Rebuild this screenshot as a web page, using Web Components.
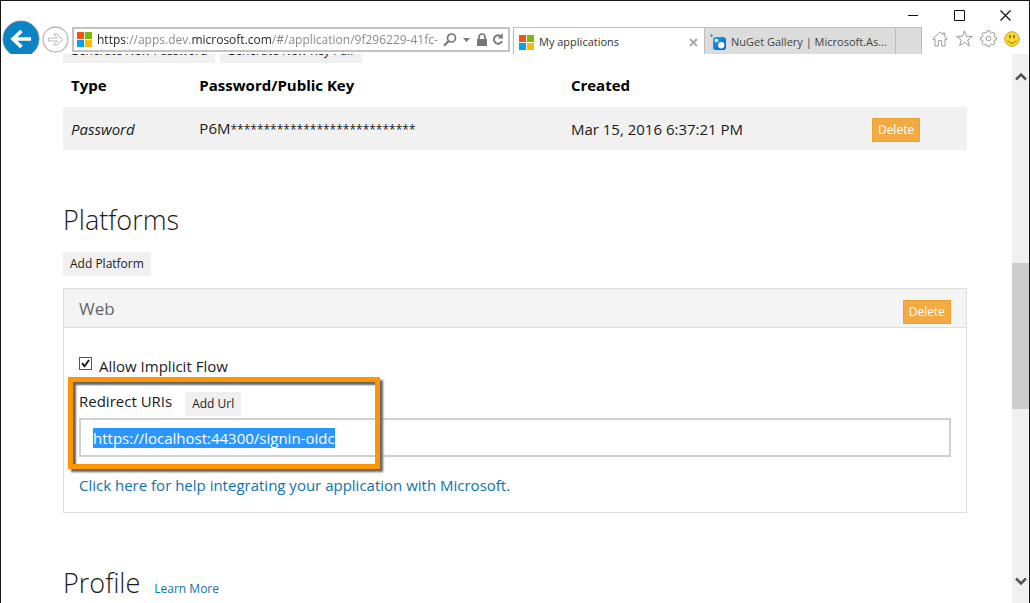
<!DOCTYPE html>
<html lang="en">
<head>
<meta charset="utf-8">
<title>My applications</title>
<style>
  html, body { margin: 0; height: 100%; }
  body { font-family: "Open Sans", "Noto Sans", sans-serif; font-size: 15px; line-height: 24px; color: #1b1b1b; overflow: hidden; }
</style>
</head>
<body>
<browser-window>
  <browser-toolbar slot="toolbar"></browser-toolbar>
  <app-page></app-page>
</browser-window>

<script>
const define = (name, html, setup) => {
  const template = document.createElement('template');
  template.innerHTML = '<style>*{box-sizing:border-box}:host{display:block}[hidden]{display:none}</style>' + html;
  customElements.define(name, class extends HTMLElement {
    constructor() {
      super();
      this.attachShadow({ mode: 'open' }).append(template.content.cloneNode(true));
    }
    connectedCallback() { if (setup) setup(this, this.shadowRoot); }
  });
};

define('ms-logo', `
  <style>:host { flex: none; width: 15px; height: 15px; } svg { display: block; }</style>
  <svg width="15" height="15" viewBox="0 0 15 15" aria-hidden="true">
    <path fill="#f8500f" d="M0 0h7v7H0z"/><path fill="#7dba00" d="M8 0h7v7H8z"/>
    <path fill="#00a1f1" d="M0 8h7v7H0z"/><path fill="#ffb900" d="M8 8h7v7H8z"/>
  </svg>`);

define('nuget-logo', `
  <style>:host { flex: none; width: 16px; height: 16px; } svg { display: block; }</style>
  <svg width="16" height="16" viewBox="0 0 16 16" aria-hidden="true">
    <defs><linearGradient id="g" x1="0" y1="0" x2="1" y2="1"><stop offset="0" stop-color="#1ba8ee"/><stop offset="1" stop-color="#0057c2"/></linearGradient></defs>
    <path fill="#1c8fe0" d="M1.500 0 3 1.500 1.500 3 0 1.500z"/>
    <rect x="3" y="3" width="13" height="13" rx="3" fill="url(#g)"/>
    <circle cx="6.500" cy="6.500" r="1.800" fill="#fff"/><circle cx="11.300" cy="11.300" r="3.200" fill="#fff"/>
  </svg>`);

define('icon-button', `
  <style>
    :host { flex: none; }
    button { display: flex; width: 100%; height: 100%; margin: 0; padding: 0; border: 0; background: none; align-items: center; justify-content: center; }
    ::slotted(svg) { display: block; }
  </style>
  <button type="button"><slot></slot></button>`,
  (host, root) => root.querySelector('button').setAttribute('aria-label', host.getAttribute('label')));

define('app-button', `
  <style>
    :host { display: inline-block; flex: none; }
    button { display: block; height: 24px; margin: 0; padding: 0 7px; border: 0; background: #f0f0f0; color: #1b1b1b; font: 12px/24px "Open Sans", "Noto Sans", sans-serif; white-space: nowrap; }
    :host([kind="warning"]) button { background: #f2ab43; border: 1px solid #efa32f; color: #fff; padding: 0 5px; line-height: 22px; }
  </style>
  <button type="button"><slot></slot></button>`);

define('browser-tab', `
  <style>
    :host { flex: 0 1 191px; min-width: 0; display: flex; align-items: center; gap: 5px; height: 27px; padding: 2px 5px 0; border: solid #bdbdbd; border-width: 1px 0 0 1px; background: #dcdcdc; color: #444; font-size: 11px; line-height: 18px; }
    :host([current]) { background: #fff; color: #333; }
    .title { flex: 1; min-width: 0; overflow: hidden; text-overflow: ellipsis; white-space: nowrap; }
    icon-button { width: 12px; height: 12px; }
  </style>
  <slot name="icon"></slot><span class="title"><slot></slot></span>
  <icon-button label="Close tab" hidden><svg width="9" height="9" viewBox="0 0 9 9"><path d="M1 1l7 7M8 1 1 8" stroke="#aaa" stroke-width="2"/></svg></icon-button>`,
  (host, root) => { root.querySelector('icon-button').hidden = !host.hasAttribute('current'); });

define('address-bar', `
  <style>
    :host { flex: 1; min-width: 0; display: flex; align-items: center; height: 25px; padding: 0 3px; gap: 5px; border: 2px solid #c3c3c3; background: #fff; }
    input { flex: 1; min-width: 0; margin: 0; padding: 0; border: 0; outline: 0; font: 12px/18px "Open Sans", "Noto Sans", sans-serif; color: transparent;
      background: linear-gradient(90deg, #222 0 29px, #858585 29px 94px, #222 94px 175px, #858585 175px); -webkit-background-clip: text; background-clip: text; }
    icon-button { width: 14px; height: 16px; }
    .tools { display: flex; align-items: center; gap: 2px; }
  </style>
  <ms-logo></ms-logo>
  <input type="text" aria-label="Address" value="https://apps.dev.microsoft.com/#/application/9f296229-41fc-42c8">
  <div class="tools">
    <icon-button label="Search"><svg width="14" height="14" viewBox="0 0 14 14"><circle cx="8.500" cy="5" r="4" fill="none" stroke="#777" stroke-width="1.700"/><path d="M5.700 8 1 12.700" stroke="#777" stroke-width="2.200"/></svg></icon-button>
    <icon-button label="Search options"><svg width="7" height="4" viewBox="0 0 7 4"><path d="M0 0h7L3.500 4z" fill="#777"/></svg></icon-button>
    <icon-button label="Security report"><svg width="12" height="14" viewBox="0 0 12 14"><path d="M1 6h10v7H1z" fill="#777"/><path d="M3 6V4a3 3 0 0 1 6 0v2" fill="none" stroke="#777" stroke-width="1.700"/></svg></icon-button>
    <icon-button label="Refresh"><svg width="12" height="13" viewBox="0 0 12 13"><path d="M9.600 4.200A4.200 4.200 0 1 0 10 8" fill="none" stroke="#777" stroke-width="1.900"/><path d="M10.800 0v5.500H5.600z" fill="#777"/></svg></icon-button>
  </div>`);

define('browser-toolbar', `
  <style>
    :host { flex: none; padding-right: 1px; background: #fff; }
    .caption { display: flex; justify-content: flex-end; height: 26px; padding: 2px 0 0; }
    .caption icon-button { width: 46px; height: 24px; }
    .bar { display: flex; align-items: flex-start; height: 27px; }
    .back { width: 38px; height: 34px; margin: -7px 1px 0 1px; overflow: hidden; }
    .forward { width: 27px; height: 27px; margin: -1px 3px 0 1px; }
    .tabs { display: flex; flex: 0 1 409px; min-width: 0; margin-left: 3px; }
    .new { width: 27px; height: 27px; background: #dcdcdc; border: solid #bdbdbd; border-width: 1px 1px 0 1px; }
    .tools { display: flex; margin: 0 4px 0 6px; }
    .tools icon-button { width: 24px; height: 23px; }
  </style>
  <div class="caption">
    <icon-button label="Minimize"><svg width="10" height="10" viewBox="0 0 10 10"><path d="M0 5.500h10" stroke="#111"/></svg></icon-button>
    <icon-button label="Maximize"><svg width="11" height="11" viewBox="0 0 11 11"><path d="M.5.5h10v10H.5z" fill="none" stroke="#111"/></svg></icon-button>
    <icon-button label="Close"><svg width="11" height="11" viewBox="0 0 11 11"><path d="M.5.5l10 10M10.500.5l-10 10" stroke="#111" stroke-width="1.200"/></svg></icon-button>
  </div>
  <div class="bar">
    <icon-button class="back" label="Back"><svg width="38" height="34" viewBox="0 0 38 34"><circle cx="19" cy="19" r="18" fill="#0a84c6" stroke="#7b8b94"/><path d="M29 19H12M19.500 11 11 19l8.500 8" fill="none" stroke="#fff" stroke-width="3.600"/></svg></icon-button>
    <icon-button class="forward" label="Forward"><svg width="27" height="27" viewBox="0 0 27 27"><circle cx="13.500" cy="13.500" r="12.500" fill="#fff" stroke="#b9b9b9" stroke-width="1.300"/><path d="M6.500 12h8.700l-3.400-4h3.400l5.300 5.500-5.300 5.500h-3.400l3.400-4H6.500z" fill="#fff" stroke="#b9b9b9"/></svg></icon-button>
    <address-bar></address-bar>
    <div class="tabs">
      <browser-tab current><ms-logo slot="icon"></ms-logo>My applications</browser-tab>
      <browser-tab><nuget-logo slot="icon"></nuget-logo>NuGet Gallery | Microsoft.As...</browser-tab>
      <icon-button class="new" label="New tab"></icon-button>
    </div>
    <div class="tools">
      <icon-button label="Home"><svg width="16" height="16" viewBox="0 0 16 16"><path d="M.7 8 8 .8l2.800 2.800V2h2v3.500L15.300 8l-1 1-1.300-1.200V15H9.700V9.700H6.300V15H3V7.800L1.700 9z" fill="#fff" stroke="#999"/></svg></icon-button>
      <icon-button label="Favorites"><svg width="17" height="17" viewBox="0 0 17 17"><path d="M8.500.9l2 5.400 5.800.2-4.600 3.600 1.700 5.600-4.900-3.300-4.900 3.300 1.700-5.600L.7 6.500l5.800-.2z" fill="#fff" stroke="#999"/></svg></icon-button>
      <icon-button label="Tools"><svg width="17" height="17" viewBox="0 0 17 17"><path fill="#fff" stroke="#999" stroke-linejoin="round" d="M7.200.7h2.600l.4 2 1.300.5 1.700-1.100 1.800 1.800-1.100 1.700.5 1.300 2 .4v2.600l-2 .4-.5 1.300 1.100 1.700-1.800 1.800-1.700-1.100-1.300.5-.4 1.900H7.200l-.4-1.900-1.300-.5-1.700 1.100L2 13.300l1.100-1.700-.5-1.300-2-.4V7.300l2-.4.5-1.300L2 3.900l1.800-1.800 1.700 1.100 1.300-.5z"/><circle cx="8.500" cy="8.500" r="2.300" fill="#fff" stroke="#999"/></svg></icon-button>
      <icon-button label="Send a smile"><svg width="16" height="16" viewBox="0 0 16 16"><circle cx="8" cy="8" r="7.300" fill="#fbd92c" stroke="#c9a53a"/><path d="M6 4v3.300M10 4v3.300" stroke="#6b5a18" stroke-width="1.400"/><path d="M3.800 9.500c1.600 3.600 6.800 3.600 8.400 0" fill="none" stroke="#8a6f1a"/></svg></icon-button>
    </div>
  </div>`);

define('page-scrollbar', `
  <style>
    :host { flex: none; width: 17px; display: flex; flex-direction: column; background: #f0f0f0; }
    icon-button { height: 44px; }
    .track { flex: 1; display: grid; grid-template-rows: 165fr 145fr 150fr; }
    .thumb { grid-row: 2; background: #cdcdcd; }
  </style>
  <icon-button label="Scroll up"><svg width="12" height="9" viewBox="0 0 12 9"><path d="M1 7.500l5-5 5 5" fill="none" stroke="#555" stroke-width="2.600"/></svg></icon-button>
  <div class="track"><div class="thumb"></div></div>
  <icon-button label="Scroll down"><svg width="12" height="9" viewBox="0 0 12 9"><path d="M1 1.500l5 5 5-5" fill="none" stroke="#555" stroke-width="2.600"/></svg></icon-button>`);

define('browser-window', `
  <style>
    :host { display: flex; flex-direction: column; height: 100vh; border: 1px solid #171717; background: #fff; overflow: hidden; }
    .view { flex: 1; min-height: 0; display: flex; border-bottom: 1px solid #b5b5b5; }
    .content { flex: 1; min-width: 0; overflow: hidden; }
  </style>
  <slot name="toolbar"></slot>
  <div class="view"><div class="content"><slot></slot></div><page-scrollbar></page-scrollbar></div>`);

define('credentials-table', `
  <style>
    table { width: 100%; border-collapse: collapse; table-layout: fixed; }
    th, td { padding: 0 8px; text-align: left; font-weight: 400; white-space: nowrap; }
    thead th { height: 44px; font-weight: 700; color: #000; }
    tbody { background: #f1f1f1; }
    tbody tr > * { height: 43px; }
    tbody th { font-style: italic; }
    .mask { font-size: 12px; }
    app-button { display: block; width: fit-content; margin-top: 3px; }
    .type { width: 14.2%; } .key { width: 41.1%; } .created { width: 33.3%; }
  </style>
  <table>
    <colgroup><col class="type"><col class="key"><col class="created"><col></colgroup>
    <thead><tr><th scope="col">Type</th><th scope="col">Password/Public Key</th><th scope="col">Created</th><td></td></tr></thead>
    <tbody><tr><th scope="row">Password</th><td>P6M<span class="mask">****************************</span></td><td>Mar 15, 2016 6:37:21 PM</td><td><app-button kind="warning">Delete</app-button></td></tr></tbody>
  </table>`);

define('section-heading', `
  <style>
    :host { display: flex; align-items: baseline; gap: 14px; margin-top: 50px; }
    h2 { margin: 0; font-size: 27px; line-height: 40px; font-weight: 300; }
  </style>
  <h2><slot></slot></h2><slot name="aside"></slot>`);

define('call-out', `
  <style>
    :host { position: relative; }
    .frame { position: absolute; top: -14px; bottom: -12px; left: -11px; width: 312px; border: 5px solid #ff9500; pointer-events: none; box-shadow: 3px 3px 2px #666, inset 3px 3px 2px #666; }
  </style>
  <slot></slot><div class="frame"></div>`);

define('redirect-field', `
  <style>
    .row { display: flex; align-items: center; gap: 13px; height: 25px; }
    label { margin-bottom: 6px; }
    input { display: block; width: 100%; height: 39px; margin: 2px 0 0; padding: 0 12px; border: 2px solid #d0d0d0; outline: 0; background: #fff; font: 15px/21px "Open Sans", "Noto Sans", sans-serif; color: #1b1b1b; }
    input::selection { background: rgba(40, 149, 255, .99); color: #fff; }
  </style>
  <div class="row"><label for="uri">Redirect URIs</label><app-button>Add Url</app-button></div>
  <input id="uri" type="text" value="https://localhost:44300/signin-oidc">`,
  (host, root) => { const uri = root.querySelector('input'); uri.focus({ preventScroll: true }); uri.select(); });

define('implicit-toggle', `
  <style>
    label { display: flex; align-items: center; gap: 7px; }
    input { appearance: none; width: 13px; height: 13px; margin: 0; border: 1px solid #555; background: #fff; }
    .box { display: grid; margin-bottom: 5px; }
    .box > * { grid-area: 1 / 1; }
    svg { pointer-events: none; z-index: 1; visibility: hidden; }
    input:checked + svg { visibility: visible; }
  </style>
  <label><span class="box"><input type="checkbox" checked><svg width="13" height="13" viewBox="0 0 13 13"><path d="M3 6.200l2.500 3L10 3" fill="none" stroke="#111" stroke-width="1.800"/></svg></span><slot></slot></label>`);

define('platform-panel', `
  <style>
    :host { margin-top: 12px; border: 1px solid #dedede; }
    header { display: flex; align-items: center; justify-content: space-between; height: 39px; padding: 0 15px; background: #f4f4f4; border-bottom: 1px solid #dedede; }
    h3 { margin: 0; font-size: 17px; font-weight: 400; color: #666; align-self: flex-start; line-height: 40px; }
    app-button { margin-top: 7px; }
    .body { padding: 26px 15px 15px; }
  </style>
  <header><h3><slot name="title"></slot></h3><app-button kind="warning">Delete</app-button></header>
  <div class="body"><slot></slot></div>`);

define('app-page', `
  <style>
    :host { padding: 0 45px 0 62px; }
    .actions { display: flex; gap: 5px; margin-top: -15px; }
    a { color: #0f72aa; text-decoration: none; }
    .small { font-size: 12px; }
    .add { display: block; margin-top: 12px; }
    call-out { margin: 13px 0 16px; }
  </style>
  <main>
    <div class="actions"><app-button>Generate New Password</app-button><app-button>Generate New Key Pair</app-button></div>
    <credentials-table></credentials-table>
    <section-heading>Platforms</section-heading>
    <app-button class="add">Add Platform</app-button>
    <platform-panel>
      <span slot="title">Web</span>
      <implicit-toggle>Allow Implicit Flow</implicit-toggle>
      <call-out><redirect-field></redirect-field></call-out>
      <a href="#help">Click here for help integrating your application with Microsoft.</a>
    </platform-panel>
    <section-heading>Profile<a slot="aside" class="small" href="#learn">Learn More</a></section-heading>
  </main>`);
</script>
</body>
</html>
